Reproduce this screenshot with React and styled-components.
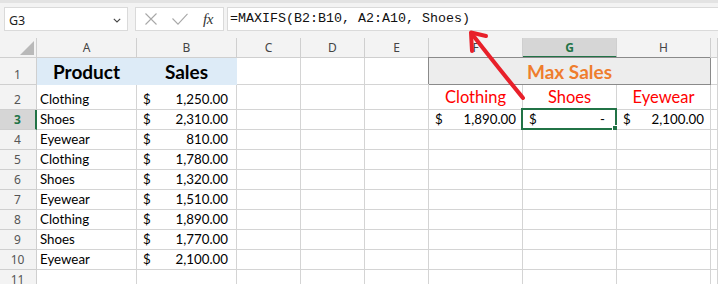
import React from 'react';
import styled, { createGlobalStyle } from 'styled-components';

const Global = createGlobalStyle`
  html, body { margin: 0; padding: 0; background: #fff; }
  body { width: 718px; height: 284px; overflow: hidden; }
`;

const GREEN = '#217346';
const GRID = '#d4d4d4';
const HDR_LINE = '#cfcfcf';

const Window = styled.div`
  position: relative;
  width: 718px;
  height: 284px;
  overflow: hidden;
  background: #fff;
  display: flex;
  flex-direction: column;
`;

const FormulaRow = styled.div`
  height: 38px;
  box-sizing: border-box;
  flex: none;
  background: #f3f3f3;
  border-top: 3px solid #e3e3e3;
  padding: 4px 0 0 4px;
  display: flex;
  align-items: flex-start;
`;

const Box = styled.div`
  height: 24px;
  box-sizing: border-box;
  background: #fff;
  border: 1px solid #dadada;
  display: flex;
  align-items: center;
`;

const NameBox = styled(Box)`
  width: 124px;
  padding: 2px 6px 0 4px;
  justify-content: space-between;
  font-family: "Noto Sans", "Open Sans", sans-serif;
  font-size: 12.5px;
  color: #222;
`;

const Tools = styled(Box)`
  width: 89px;
  margin-left: 7px;
  padding-left: 9px;
`;

const ToolIcon = styled.span`
  display: inline-flex;
  width: ${p => p.$w}px;
  margin-right: ${p => p.$mr}px;
`;

const Fx = styled.span`
  font-family: "Liberation Serif", "DejaVu Serif", serif;
  font-style: italic;
  font-size: 15px;
  color: #333;
  letter-spacing: -0.5px;
`;

const FormulaInput = styled(Box)`
  flex: 1;
  margin-left: 3px;
  border-right: none;
  padding: 0 0 2px 2px;
  font-family: "Liberation Mono", "DejaVu Sans Mono", monospace;
  font-size: 13.33px;
  color: #111;
  white-space: pre;
`;

const Sheet = styled.div`
  display: grid;
  grid-template-columns: 37px 100px 100px 64px 64px 64px 94px 94px 94px 1fr;
  grid-template-rows: 20px 27px 25px repeat(9, 20px);
`;

const Corner = styled.div`
  background: #f3f3f3;
  border-right: 1px solid ${HDR_LINE};
  border-bottom: 1px solid ${HDR_LINE};
  box-sizing: border-box;
`;

const Triangle = styled.svg`
  display: block;
  margin: 2px 0 0 19px;
`;

const ColHeader = styled.div`
  box-sizing: border-box;
  background: ${p => (p.$sel ? '#d6d6d6' : '#f3f3f3')};
  border-right: 1px solid ${HDR_LINE};
  border-bottom: ${p => (p.$sel ? `2px solid ${GREEN}` : `1px solid ${HDR_LINE}`)};
  display: flex;
  align-items: center;
  justify-content: center;
  padding-top: ${p => (p.$sel ? 1 : 0)}px;
  font-family: "Noto Sans", "Open Sans", sans-serif;
  font-size: 12px;
  font-weight: ${p => (p.$sel ? 700 : 400)};
  color: ${p => (p.$sel ? GREEN : '#444')};
`;

const RowHeader = styled.div`
  box-sizing: border-box;
  background: ${p => (p.$sel ? '#d6d6d6' : '#f3f3f3')};
  border-right: ${p => (p.$sel ? `2px solid ${GREEN}` : `1px solid ${HDR_LINE}`)};
  border-bottom: 1px solid ${HDR_LINE};
  display: flex;
  align-items: flex-end;
  justify-content: center;
  padding: 0 ${p => (p.$sel ? 0 : 1)}px 1px 0;
  font-family: "Noto Sans", "Open Sans", sans-serif;
  font-size: 12px;
  line-height: 17px;
  font-weight: ${p => (p.$sel ? 700 : 400)};
  color: ${p => (p.$sel ? GREEN : '#555')};
`;

const Cell = styled.div`
  position: relative;
  box-sizing: border-box;
  background: ${p => p.$fill || '#fff'};
  border-right: 1px solid ${p => p.$line || GRID};
  border-bottom: 1px solid ${p => p.$line || GRID};
  grid-column: ${p => (p.$span ? `span ${p.$span}` : 'auto')};
  display: flex;
  align-items: flex-end;
  justify-content: ${p => p.$justify || 'flex-start'};
  padding: 0 ${p => p.$pr ?? 0}px ${p => p.$pb ?? 1}px ${p => p.$pl ?? 3}px;
  font-family: Lato, "Noto Sans", sans-serif;
  font-size: ${p => p.$size || 13.3}px;
  line-height: ${p => p.$lh || 17}px;
  font-weight: ${p => p.$weight || 400};
  color: ${p => p.$color || '#000'};
  white-space: nowrap;
`;

const Merged = styled(Cell)`
  border-right: 1px solid #8a8a8a;
  border-bottom: 1px solid #8a8a8a;
  box-shadow: -1px -1px 0 0 #8a8a8a;
`;

const Selection = styled.div`
  position: absolute;
  top: -2px;
  left: -2px;
  right: -1px;
  bottom: -1px;
  border: 2px solid ${GREEN};
  pointer-events: none;
`;

const Handle = styled.div`
  position: absolute;
  right: -4px;
  bottom: -4px;
  width: 5px;
  height: 5px;
  background: ${GREEN};
  border: 1px solid #fff;
`;

const Overlay = styled.svg`
  position: absolute;
  left: 0;
  top: 0;
  pointer-events: none;
`;

const COLS = ['A', 'B', 'C', 'D', 'E', 'F', 'G', 'H', 'I'];

const data = [
  ['Clothing', '1,250.00'],
  ['Shoes', '2,310.00'],
  ['Eyewear', '810.00'],
  ['Clothing', '1,780.00'],
  ['Shoes', '1,320.00'],
  ['Eyewear', '1,510.00'],
  ['Clothing', '1,890.00'],
  ['Shoes', '1,770.00'],
  ['Eyewear', '2,100.00'],
];

function Acct({ value, pl = 6, pr = 6, children }) {
  return (
    <Cell $justify="space-between" $pl={pl} $pr={pr}>
      <span>$</span>
      <span>{value}</span>
      {children}
    </Cell>
  );
}

function Empty() {
  return <Cell />;
}

function Chevron() {
  return (
    <svg width="8" height="5" viewBox="0 0 8 5">
      <path d="M0.8 0.8 L4 4 L7.2 0.8" fill="none" stroke="#444" strokeWidth="1.1" />
    </svg>
  );
}

export default function App() {
  const rows = [];

  rows.push(
    <React.Fragment key="r1">
      <RowHeader>1</RowHeader>
      <Cell $fill="#ddebf7" $line="#ddebf7" $justify="center" $pl={0} $size={19} $lh={23} $weight={700}>Product</Cell>
      <Cell $fill="#ddebf7" $line="#ddebf7" $justify="center" $pl={0} $size={19} $lh={23} $weight={700}>Sales</Cell>
      <Empty />
      <Empty />
      <Empty />
      <Merged $span={3} $fill="#ededed" $justify="center" $pl={0} $size={19} $lh={23} $weight={700} $color="#ef7d2d">
        Max Sales
      </Merged>
      <Empty />
    </React.Fragment>
  );

  data.forEach(([prod, val], i) => {
    const r = i + 2;
    let extra;
    if (r === 2) {
      extra = ['Clothing', 'Shoes', 'Eyewear'].map(t => (
        <Cell key={t} $justify="center" $pl={0} $size={16.5} $lh={20} $pb={2} $color="#ff0000">{t}</Cell>
      ));
    } else if (r === 3) {
      extra = [
        <Acct key="f" value="1,890.00" pl={6} pr={6} />,
        <Acct key="g" value="-" pl={6} pr={11}>
          <Selection>
            <Handle />
          </Selection>
        </Acct>,
        <Acct key="h" value="2,100.00" pl={6} pr={6} />,
      ];
    } else {
      extra = [<Empty key="f" />, <Empty key="g" />, <Empty key="h" />];
    }
    rows.push(
      <React.Fragment key={`r${r}`}>
        <RowHeader $sel={r === 3}>{r}</RowHeader>
        <Cell>{prod}</Cell>
        <Acct value={val} pl={6} pr={8} />
        <Empty />
        <Empty />
        <Empty />
        {extra}
        <Empty />
      </React.Fragment>
    );
  });

  rows.push(
    <React.Fragment key="r11">
      <RowHeader>11</RowHeader>
      {COLS.map(c => <Empty key={c} />)}
    </React.Fragment>
  );

  return (
    <Window>
      <Global />
      <FormulaRow>
        <NameBox>
          <span>G3</span>
          <Chevron />
        </NameBox>
        <Tools>
          <ToolIcon $w={12} $mr={15}>
            <svg width="12" height="12" viewBox="0 0 12 12">
              <path d="M0.5 0.5 L11.5 11.5 M11.5 0.5 L0.5 11.5" stroke="#a8a8a8" strokeWidth="1.1" fill="none" />
            </svg>
          </ToolIcon>
          <ToolIcon $w={16} $mr={15}>
            <svg width="16" height="12" viewBox="0 0 16 12">
              <path d="M0.5 5.5 L6 11.2 L15.5 0.8" stroke="#a8a8a8" strokeWidth="1.1" fill="none" />
            </svg>
          </ToolIcon>
          <Fx>fx</Fx>
        </Tools>
        <FormulaInput>=MAXIFS(B2:B10, A2:A10, Shoes)</FormulaInput>
      </FormulaRow>
      <Sheet>
        <Corner>
          <Triangle width="16" height="16" viewBox="0 0 16 16">
            <path d="M1 15 L15 1 L15 15 Z" fill="#b9b9b9" />
          </Triangle>
        </Corner>
        {COLS.map(c => (
          <ColHeader key={c} $sel={c === 'G'}>{c === 'I' ? '' : c}</ColHeader>
        ))}
        {rows}
      </Sheet>
      <Overlay width="718" height="284" viewBox="0 0 718 284">
        <g stroke="#e8202a" strokeWidth="4" strokeLinecap="round" strokeLinejoin="round" fill="none">
          <path d="M523 98 C 510 82, 492 60, 472 34" />
          <path d="M486 36 L471 32.5 L472 51" />
        </g>
      </Overlay>
    </Window>
  );
}
